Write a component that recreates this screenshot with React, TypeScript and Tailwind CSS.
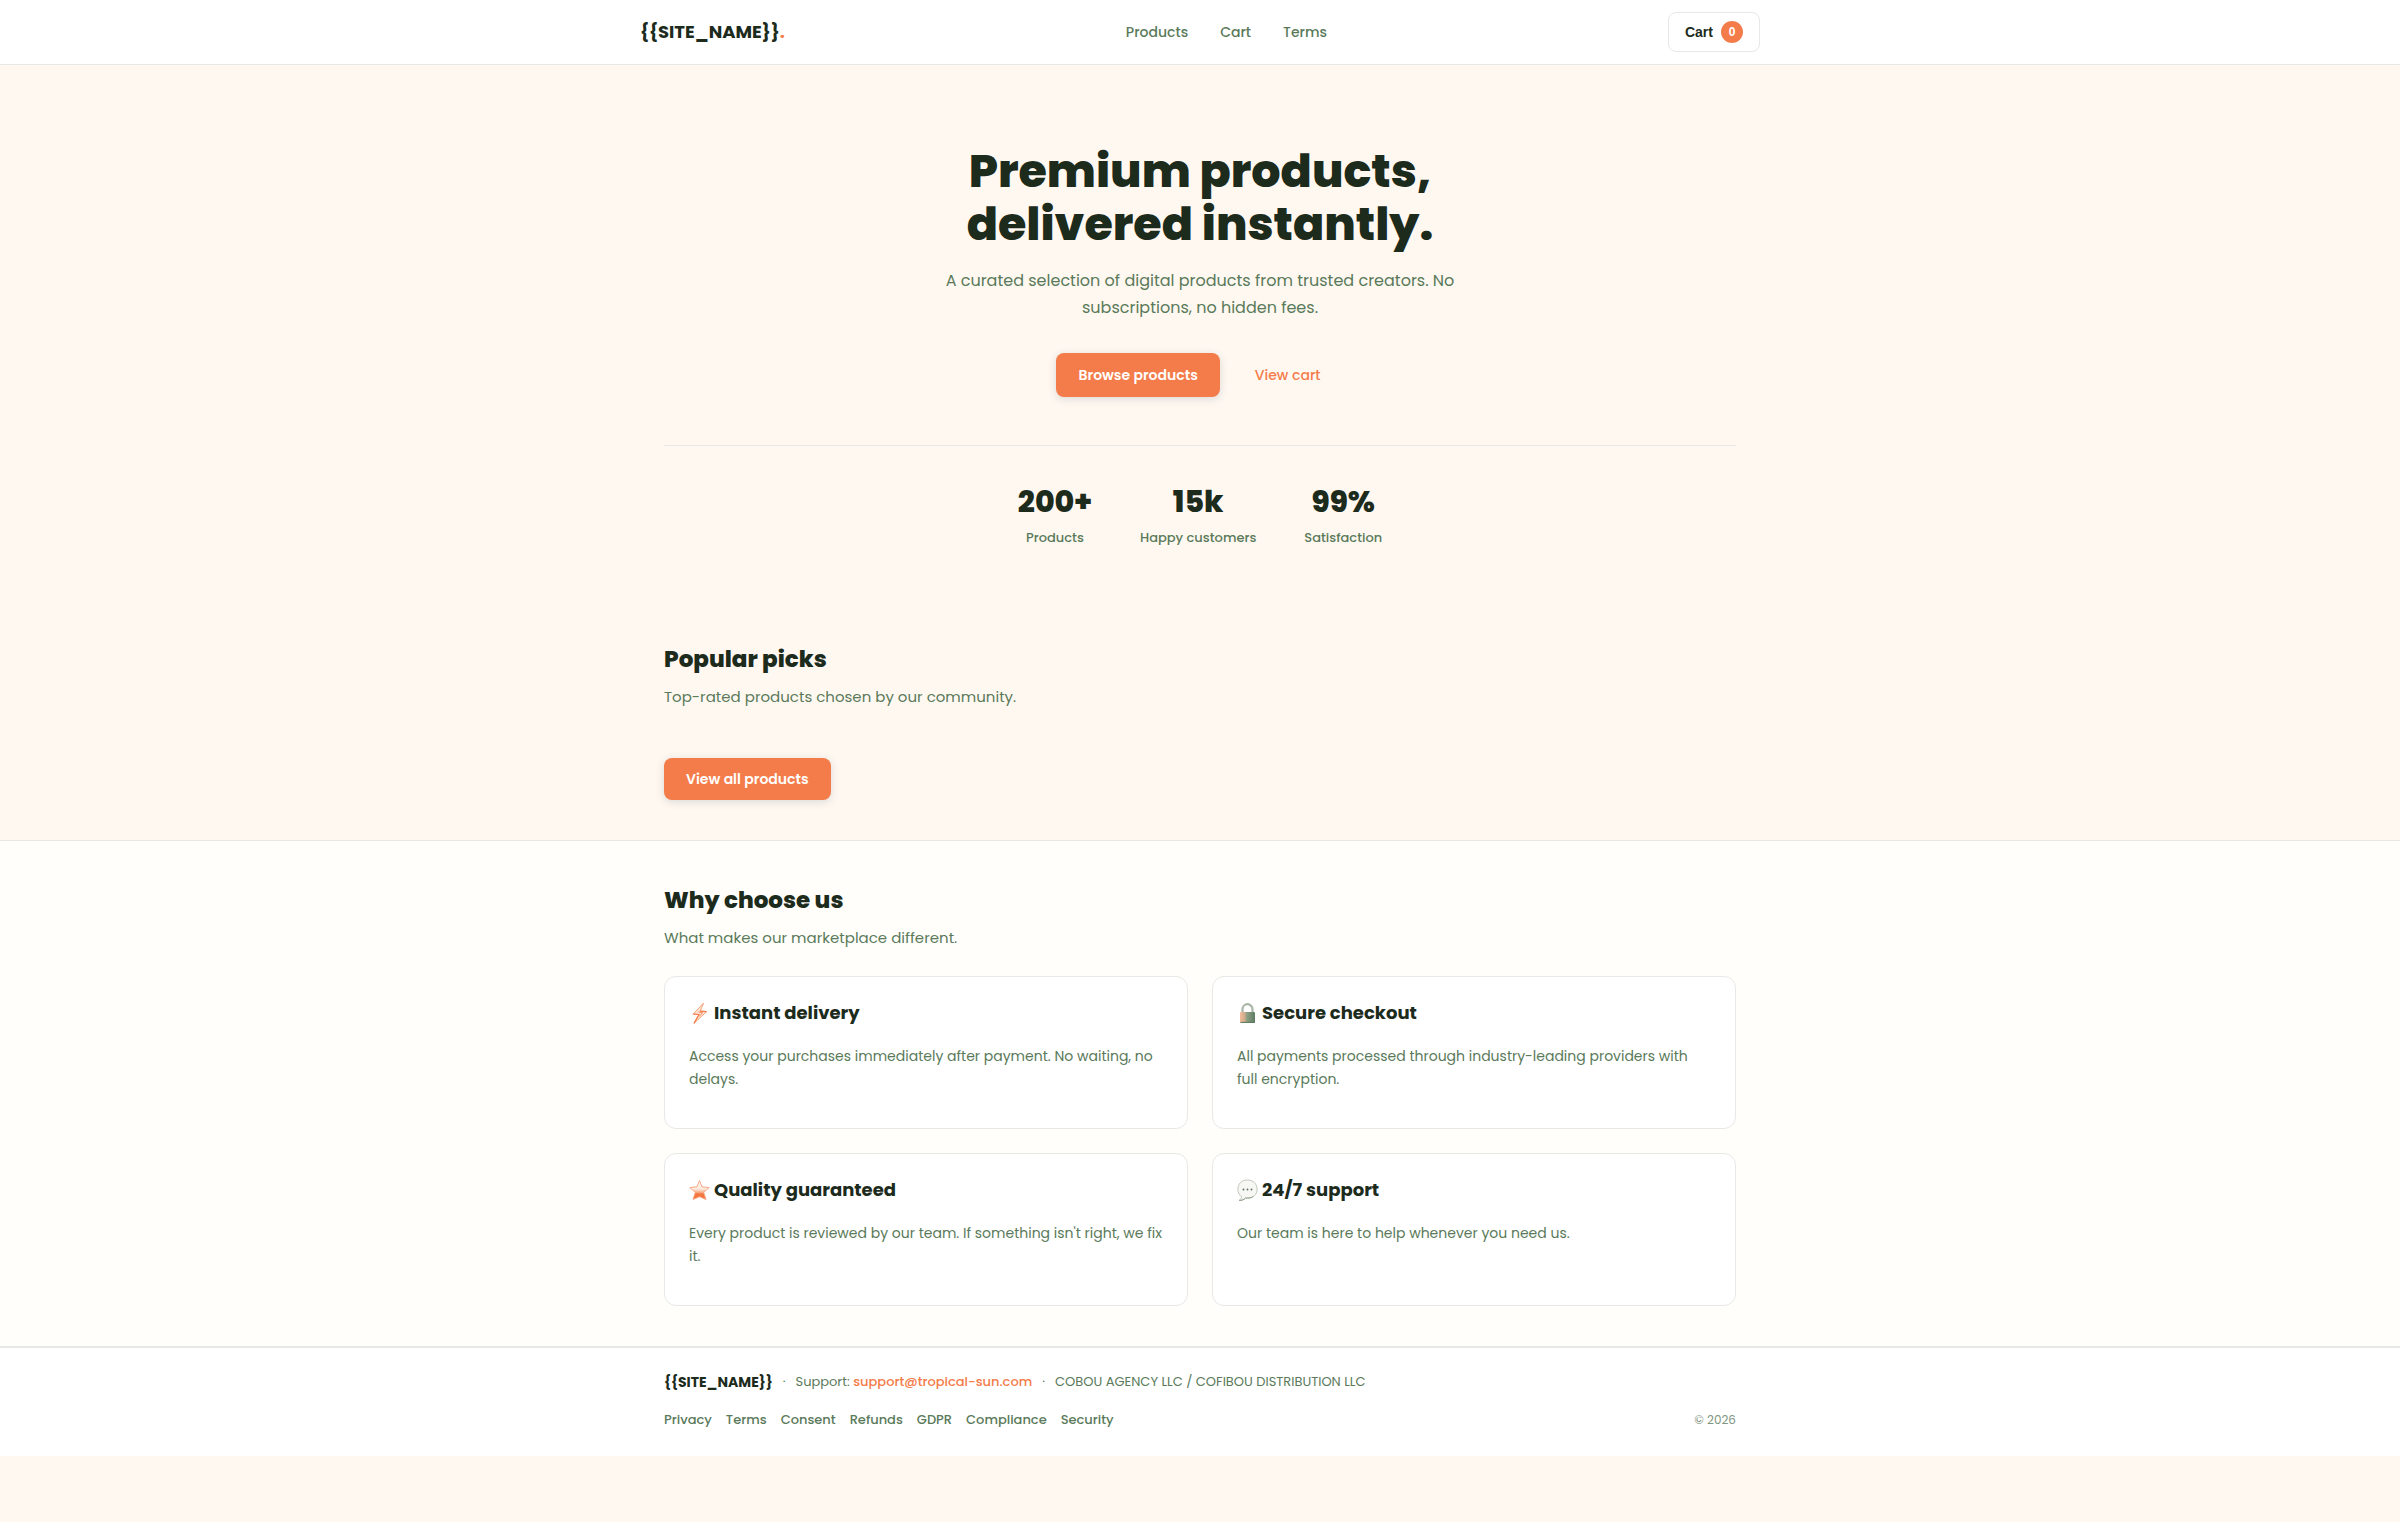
import type { ReactNode } from 'react';

const navLinks = ['Products', 'Cart', 'Terms'];

const stats = [
  { value: '200+', label: 'Products' },
  { value: '15k', label: 'Happy customers' },
  { value: '99%', label: 'Satisfaction' },
];

const legalLinks = ['Privacy', 'Terms', 'Consent', 'Refunds', 'GDPR', 'Compliance', 'Security'];

const BoltIcon = () => (
  <svg viewBox="0 0 21 22" className="h-[22px] w-[21px]" aria-hidden="true">
    <path d="M14.6 1 4 12.2l6 .3L5 21.4 17.6 9.6l-6.4-.4z" fill="#fde3d3" stroke="#f5a57c" strokeWidth="1" strokeLinejoin="round" />
    <path d="M4.4 12 10 12.5 5 21.4M17.6 9.6l-6.4-.4" fill="none" stroke="#f47c4a" strokeWidth="1.2" strokeLinejoin="round" />
    <path d="m9.4 9.8 4.2 1.1-3.3 3.2" fill="none" stroke="#f58a5c" strokeWidth="1" />
  </svg>
);

const LockIcon = () => (
  <svg viewBox="0 0 21 22" className="h-[22px] w-[21px]" aria-hidden="true">
    <defs>
      <linearGradient id="lock-body" x1="0" x2="1" y1="0" y2="0">
        <stop offset="0" stopColor="#f3bd9c" />
        <stop offset="0.3" stopColor="#d3ab8b" />
        <stop offset="0.45" stopColor="#8ea084" />
        <stop offset="1" stopColor="#5d7c62" />
      </linearGradient>
    </defs>
    <path d="M5.5 11V7.2a5 5 0 0 1 10 0V11" fill="none" stroke="#a9b5a6" strokeWidth="2.2" />
    <rect x="3" y="10" width="15" height="11" rx="1" fill="url(#lock-body)" />
    <path d="M3.5 20.4h14" stroke="#5a7a5a" strokeWidth="1" />
  </svg>
);

const StarIcon = () => (
  <svg viewBox="0 0 21 22" className="h-[22px] w-[21px]" aria-hidden="true">
    <defs>
      <linearGradient id="star-fill" x1="0" x2="0" y1="0" y2="1">
        <stop offset="0" stopColor="#ffffff" />
        <stop offset="0.45" stopColor="#fde8dc" />
        <stop offset="0.62" stopColor="#f8b08a" />
        <stop offset="0.7" stopColor="#f47840" />
        <stop offset="1" stopColor="#f4723a" />
      </linearGradient>
    </defs>
    <path
      d="m10.5 1.5 2.5 6.3 7.2.8-5.5 4.7 2.3 7.2-6.500-2.800-6.500 2.800 2.300-7.200L.8 8.600 8 7.800z"
      fill="url(#star-fill)"
      stroke="#f6a883"
      strokeWidth="1"
      strokeLinejoin="round"
    />
  </svg>
);

const ChatIcon = () => (
  <svg viewBox="0 0 21 22" className="h-[22px] w-[21px]" aria-hidden="true">
    <path
      d="M10.5 1C4.8 1 .9 4.6.9 10.2c0 3.4 1.5 6 3.8 7.5-.3 1.6-1.2 2.7-2.5 3.7 2.9.2 5-.9 6.2-2.4.7.1 1.4.1 2.1.1 5.7 0 9.6-3.4 9.6-8.9S16.2 1 10.5 1z"
      fill="#f7f7f4"
      stroke="#bfc7bb"
      strokeWidth="1"
    />
    <path d="M2.2 21.4c2.9.2 5-.9 6.2-2.4 2.5.4 5.5 0 7.8-1.3" fill="none" stroke="#8fa08d" strokeWidth="1" />
    <circle cx="6.5" cy="10.5" r="0.9" fill="#5a705c" />
    <circle cx="10.5" cy="10.5" r="0.9" fill="#5a705c" />
    <circle cx="14.5" cy="10.5" r="0.9" fill="#5a705c" />
  </svg>
);

const features = [
  { icon: <BoltIcon />, title: 'Instant delivery', text: 'Access your purchases immediately after payment. No waiting, no delays.' },
  { icon: <LockIcon />, title: 'Secure checkout', text: 'All payments processed through industry-leading providers with full encryption.' },
  { icon: <StarIcon />, title: 'Quality guaranteed', text: "Every product is reviewed by our team. If something isn't right, we fix it." },
  { icon: <ChatIcon />, title: '24/7 support', text: 'Our team is here to help whenever you need us.' },
];

const PrimaryButton = ({ children, className }: { children: ReactNode; className: string }) => (
  <button
    type="button"
    className={`rounded-lg bg-[#f47c4a] px-[22px] text-sm font-semibold text-white shadow-[0_2px_8px_rgba(30,60,90,0.16)] ${className}`}
  >
    {children}
  </button>
);

const SectionTitle = ({ title, subtitle }: { title: string; subtitle: string }) => (
  <>
    <h2 className="text-[23px] leading-[38px] font-extrabold">{title}</h2>
    <p className="mt-1.5 text-[15px] leading-[26px] text-[#5a7a5a]">{subtitle}</p>
  </>
);

const Header = () => (
  <header className="border-b border-[#e8e8e6] bg-white">
    <div className="mx-auto flex h-16 max-w-[1120px] items-center justify-between">
      <a href="#home" className="text-lg font-bold">
        {'{{SITE_NAME}}'}
        <span className="text-[#f47c4a]">.</span>
      </a>
      <nav className="flex gap-8 text-sm font-medium text-[#5a7a5a]">
        {navLinks.map((link) => (
          <a key={link} href={`#${link.toLowerCase()}`}>{link}</a>
        ))}
      </nav>
      <button type="button" className="flex h-10 items-center gap-2 rounded-lg border border-[#e8e8e6] bg-white px-4 font-['Liberation_Sans',sans-serif] text-sm font-bold">
        Cart
        <span className="flex size-[22px] items-center justify-center rounded-full bg-[#f47c4a] text-xs text-white">0</span>
      </button>
    </div>
  </header>
);

const Hero = () => (
  <section className="mx-auto max-w-[1120px] px-6 pt-20 text-center">
    <h1 className="text-[46px] leading-[53px] font-extrabold">
      Premium products,
      <br />
      delivered instantly.
    </h1>
    <p className="mx-auto mt-4 max-w-[520px] text-base leading-[27px] text-[#5a7a5a]">
      A curated selection of digital products from trusted creators. No subscriptions, no hidden fees.
    </p>
    <div className="mt-8 flex justify-center gap-3">
      <PrimaryButton className="h-11">Browse products</PrimaryButton>
      <a href="#cart" className="flex h-11 items-center px-[23px] text-sm font-medium text-[#f47c4a]">View cart</a>
    </div>
    <dl className="mt-12 flex justify-center gap-12 border-t border-[#e8e8e6] pt-8 pb-16">
      {stats.map(({ value, label }) => (
        <div key={label} className="flex flex-col-reverse">
          <dt className="text-[13px] leading-6 font-medium text-[#5a7a5a]">{label}</dt>
          <dd className="text-3xl leading-[48px] font-extrabold">{value}</dd>
        </div>
      ))}
    </dl>
  </section>
);

const PopularPicks = () => (
  <section className="mx-auto max-w-[1120px] px-6 pt-[26px] pb-10">
    <SectionTitle title="Popular picks" subtitle="Top-rated products chosen by our community." />
    <PrimaryButton className="mt-12 h-[42px]">View all products</PrimaryButton>
  </section>
);

const WhyChooseUs = () => (
  <section className="border-y border-[#e8e8e6] bg-[#fffefa]">
    <div className="mx-auto max-w-[1120px] px-6 py-10">
      <SectionTitle title="Why choose us" subtitle="What makes our marketplace different." />
      <div className="mt-[25px] grid grid-cols-2 gap-6">
        {features.map(({ icon, title, text }) => (
          <article key={title} className="min-h-[153px] rounded-xl border border-[#e8e8e6] bg-white p-6">
            <h3 className="flex items-center gap-1 text-lg leading-6 font-bold">
              {icon}
              {title}
            </h3>
            <p className="mt-5 text-sm leading-[23px] text-[#5a7a5a]">{text}</p>
          </article>
        ))}
      </div>
    </div>
  </section>
);

const Footer = () => (
  <footer className="border-t border-[#e8e8e6] bg-white text-[#5a7a5a]">
    <div className="mx-auto max-w-[1120px] px-6 pt-[22px] pb-6">
      <div className="flex items-center gap-2.5 text-[13px] leading-6">
        <strong className="text-sm leading-6 font-bold text-[#1c2b1c]">{'{{SITE_NAME}}'}</strong>
        <span>·</span>
        <span>
          {'Support: '}
          <a href="mailto:support@tropical-sun.com" className="font-medium text-[#f47c4a]">support@tropical-sun.com</a>
        </span>
        <span>·</span>
        <span>COBOU AGENCY LLC / COFIBOU DISTRIBUTION LLC</span>
      </div>
      <div className="mt-3.5 flex items-center justify-between">
        <nav className="flex gap-3.5 text-[13px] leading-6 font-medium">
          {legalLinks.map((link) => (
            <a key={link} href={`#${link.toLowerCase()}`}>{link}</a>
          ))}
        </nav>
        <span className="text-xs leading-6 text-[#7f967f]">© 2026</span>
      </div>
    </div>
  </footer>
);

const App = () => (
  <div className="min-h-screen bg-[#fff8f1] font-[Poppins,Inter,sans-serif] text-[#1c2b1c]">
    <Header />
    <main>
      <Hero />
      <PopularPicks />
      <WhyChooseUs />
    </main>
    <Footer />
  </div>
);

export default App;
